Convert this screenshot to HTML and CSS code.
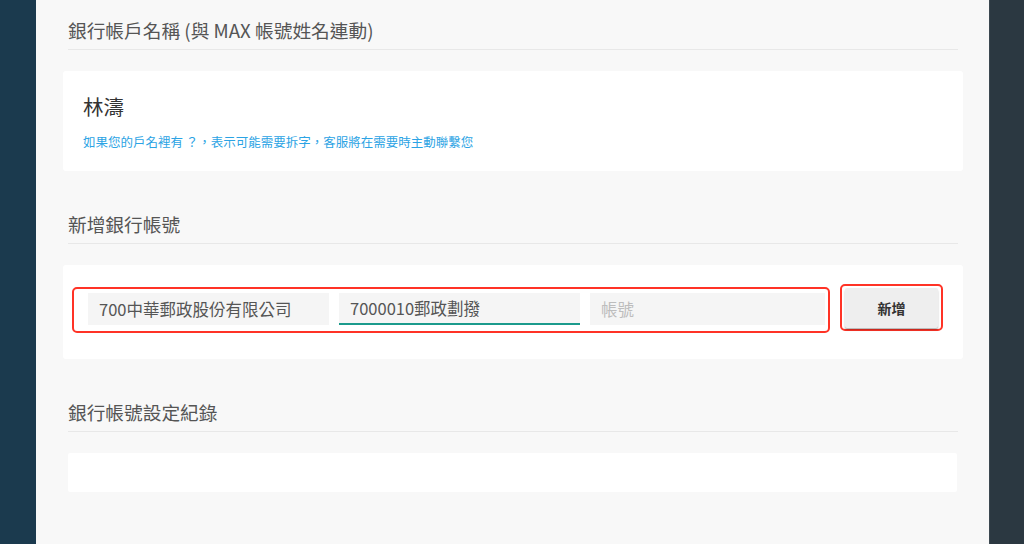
FILE: index.html
```html
<!doctype html>
<html lang="zh-Hant">
	<head>
		<meta charset="UTF-8" />
		<meta name="viewport" content="width=device-width, initial-scale=1.0" />
		<title>銀行帳號設定</title>
		<link rel="stylesheet" href="styles.css">
	</head>
	<body>
		<aside class="side side-left"></aside>

		<main class="content">
			<section class="block">
				<h3 class="block-title">銀行帳戶名稱 (與 MAX 帳號姓名連動)</h3>
				<div class="card card-name">
					<div class="account-name">林濤</div>
					<p class="hint">如果您的戶名裡有 ？，表示可能需要拆字，客服將在需要時主動聯繫您</p>
				</div>
			</section>

			<section class="block">
				<h3 class="block-title">新增銀行帳號</h3>
				<div class="card card-add">
					<!-- red outlines mark the fields and the button -->
					<div class="fields marked">
						<div class="field">700中華郵政股份有限公司</div>
						<div class="field field-active">7000010郵政劃撥</div>
						<input class="field field-input" type="text" placeholder="帳號" />
					</div>
					<div class="action marked">
						<button type="button" class="btn-add">新增</button>
					</div>
				</div>
			</section>

			<section class="block">
				<h3 class="block-title">銀行帳號設定紀錄</h3>
				<div class="card card-log"></div>
			</section>
		</main>

		<aside class="side side-right"></aside>
	</body>
</html>
```

FILE: styles.css
```css
html,
body,
h3,
p {
	margin: 0;
	padding: 0;
}

body {
	display: flex;
	height: 100vh;
	overflow: hidden;
	font-family: "Noto Sans CJK TC", "Noto Sans", sans-serif;
	background-color: #f8f8f8;
}

.side {
	flex: none;
}

.side-left {
	width: 36px;
	background-color: #1b3a4e;
}

.side-right {
	width: 35px;
	background-color: #2b3841;
	border-left: 1px solid #3c4850;
	box-sizing: border-box;
}

.content {
	flex: 1;
	padding: 18px 31px 0 32px;
	background-color: #f8f8f8;
}

.block + .block {
	margin-top: 41px;
}

.block-title {
	font-size: 18.7px;
	font-weight: normal;
	line-height: 24px;
	color: #555;
	padding-bottom: 7px;
	border-bottom: 1px solid #e8e8e8;
}

.card {
	margin: 21px -5px 0;
	background-color: #fff;
	border-radius: 3px;
}

.card-name {
	padding: 21px 20px 20px;
}

.account-name {
	font-size: 20.5px;
	line-height: 28px;
	color: #333;
}

.hint {
	margin-top: 13px;
	font-size: 12.5px;
	line-height: 18px;
	color: #2ba3e4;
}

.card-add {
	display: flex;
	align-items: flex-start;
	gap: 10px;
	padding: 19px 9px 26px;
}

.marked {
	border: 2px solid #ff3326;
	border-radius: 5px;
}

.fields {
	margin-top: 3px;
	width: 758px;
	box-sizing: border-box;
	display: flex;
	gap: 10px;
	padding: 4px 3px 6px 14px;
}

.field {
	width: 241px;
	height: 32px;
	box-sizing: border-box;
	padding: 0 11px;
	background-color: #f5f5f5;
	font-family: inherit;
	font-size: 16.5px;
	line-height: 32px;
	color: #555;
	white-space: nowrap;
}

.field-active {
	border-bottom: 2px solid #1b9a8c;
	line-height: 30px;
}

.field-input {
	flex: 1;
	border: none;
	outline: none;
}

.field-input::placeholder {
	color: #bdbdbd;
}

.action {
	padding: 2px 3px 1px;
}

.btn-add {
	display: block;
	width: 93px;
	height: 40px;
	border: none;
	border-radius: 2px;
	background-color: #eeeeee;
	box-shadow: 0 2px 2px rgba(0, 0, 0, 0.28);
	font-family: inherit;
	font-size: 14px;
	font-weight: bold;
	color: #333;
}

.card-log {
	margin: 21px 1px 0 0;
	height: 39px;
	border-radius: 2px;
}
```
